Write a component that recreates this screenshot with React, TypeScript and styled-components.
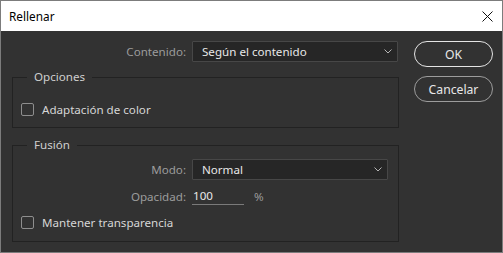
import React from 'react';
import styled, { createGlobalStyle } from 'styled-components';

const GlobalStyle = createGlobalStyle`
  html, body {
    margin: 0;
    padding: 0;
    background: #323232;
  }
  * {
    box-sizing: border-box;
  }
`;

const font = `"Noto Sans", "Open Sans", sans-serif`;

const Chevron: React.FC = () => (
  <svg width="8" height="5" viewBox="0 0 8 5">
    <polyline points="0.5,0.5 4,4 7.5,0.5" fill="none" stroke="#b4b4b4" strokeWidth="1" />
  </svg>
);

const CloseIcon: React.FC = () => (
  <svg width="11" height="11" viewBox="0 0 11 11">
    <path d="M0.5 0.5 L10.5 10.5 M10.5 0.5 L0.5 10.5" stroke="#111" strokeWidth="1" />
  </svg>
);

const App: React.FC = () => {
  return (
    <>
      <GlobalStyle />
      <S.Window>
        <S.TitleBar>
          <S.Title>Rellenar</S.Title>
          <S.Close>
            <CloseIcon />
          </S.Close>
        </S.TitleBar>
        <S.Body>
          <S.Main>
            <S.Row>
              <S.Label $width={174}>Contenido:</S.Label>
              <S.Select $width={206}>
                <span>Según el contenido</span>
                <Chevron />
              </S.Select>
            </S.Row>

            <S.Group $top={15} $height={51}>
              <S.Legend>Opciones</S.Legend>
              <S.CheckRow $top={16}>
                <S.Box />
                <span>Adaptación de color</span>
              </S.CheckRow>
            </S.Group>

            <S.Group $top={17} $height={97}>
              <S.Legend>Fusión</S.Legend>
              <S.Row $top={6}>
                <S.Label $width={173}>Modo:</S.Label>
                <S.Select $width={196}>
                  <span>Normal</span>
                  <Chevron />
                </S.Select>
              </S.Row>
              <S.Row $top={7}>
                <S.Label $width={173}>Opacidad:</S.Label>
                <S.Input>100</S.Input>
                <S.Unit>%</S.Unit>
              </S.Row>
              <S.CheckRow $top={9}>
                <S.Box />
                <span>Mantener transparencia</span>
              </S.CheckRow>
            </S.Group>
          </S.Main>

          <S.Side>
            <S.Button $primary>OK</S.Button>
            <S.Button>Cancelar</S.Button>
          </S.Side>
        </S.Body>
      </S.Window>
    </>
  );
};

export default App;

const S = {
  Window: styled.div`
    width: 503px;
    height: 253px;
    display: flex;
    flex-direction: column;
    border: 1px solid #7c7c7c;
    font-family: ${font};
    font-size: 11.6px;
    overflow: hidden;
  `,
  TitleBar: styled.div`
    height: 30px;
    flex: none;
    background: #ffffff;
    display: flex;
    align-items: center;
    justify-content: space-between;
    padding: 0 8px 0 8px;
  `,
  Title: styled.div`
    color: #000;
    font-size: 11.8px;
  `,
  Close: styled.div`
    display: flex;
    align-items: center;
    margin-right: 1px;
  `,
  Body: styled.div`
    flex: 1;
    background: #323232;
    display: flex;
    padding: 10px 0 0 11px;
  `,
  Main: styled.div`
    width: 387px;
    display: flex;
    flex-direction: column;
  `,
  Side: styled.div`
    margin-left: 15px;
    width: 79px;
    display: flex;
    flex-direction: column;
    gap: 9px;
  `,
  Row: styled.div<{ $top?: number }>`
    display: flex;
    align-items: center;
    gap: 6px;
    margin-top: ${(p) => p.$top ?? 0}px;
  `,
  Label: styled.div<{ $width: number }>`
    width: ${(p) => p.$width}px;
    text-align: right;
    color: #9c9c9c;
  `,
  Select: styled.div<{ $width: number }>`
    width: ${(p) => p.$width}px;
    height: 21px;
    background: #262626;
    border: 1px solid #474747;
    border-radius: 1px;
    display: flex;
    align-items: center;
    justify-content: space-between;
    padding: 0 5px 0 9px;
    color: #e8e8e8;
  `,
  Input: styled.div`
    width: 52px;
    height: 18px;
    border-bottom: 1px solid #7a7a7a;
    color: #e8e8e8;
    display: flex;
    align-items: center;
    padding-left: 1px;
  `,
  Unit: styled.div`
    margin-left: 4px;
    color: #9c9c9c;
  `,
  Group: styled.div<{ $top: number; $height: number }>`
    margin-top: ${(p) => p.$top}px;
    height: ${(p) => p.$height}px;
    border: 1px solid #222222;
    display: flex;
    flex-direction: column;
  `,
  Legend: styled.div`
    align-self: flex-start;
    margin: -9px 0 0 14px;
    padding: 0 7px;
    height: 16px;
    line-height: 16px;
    background: #323232;
    color: #cfcfcf;
  `,
  CheckRow: styled.div<{ $top: number }>`
    display: flex;
    align-items: center;
    gap: 8px;
    margin-top: ${(p) => p.$top}px;
    padding-left: 8px;
    height: 16px;
    color: #d6d6d6;
  `,
  Box: styled.div`
    width: 13px;
    height: 13px;
    border: 1px solid #8e8e8e;
    border-radius: 2px;
  `,
  Button: styled.div<{ $primary?: boolean }>`
    height: 26px;
    border-radius: 13px;
    border: ${(p) => (p.$primary ? '1.5px solid #e4e4e4' : '1px solid #9c9c9c')};
    color: #e8e8e8;
    display: flex;
    align-items: center;
    justify-content: center;
    font-size: 12.2px;
  `,
};
